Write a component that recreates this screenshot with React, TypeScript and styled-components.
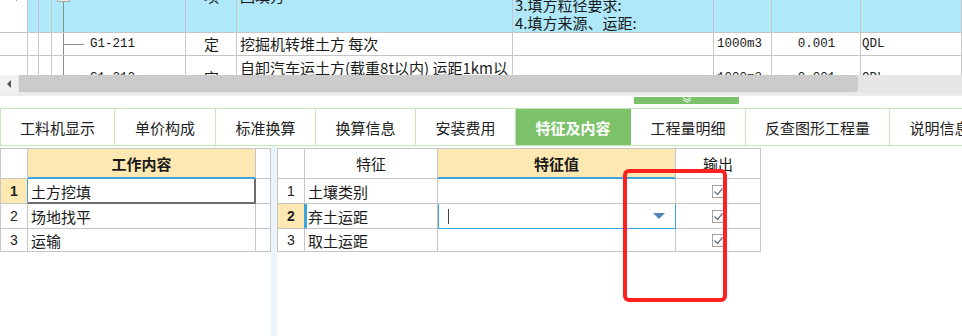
import React from "react";
import styled, { createGlobalStyle } from "styled-components";

const LINE = "#c6c6c6";
const GREEN = "#7cc26a";
const GREEN_LINE = "#c3e5b9";
const BLUE_ROW = "#aee8f9";
const HEADER_SEL = "#fde8b1";
const SEL_BLUE = "#3ea4dc";
const CJK = '"Noto Sans CJK SC", "Noto Sans", sans-serif';
const MONO = '"Liberation Mono", "DejaVu Sans Mono", monospace';

const Global = createGlobalStyle`
  html, body { margin: 0; padding: 0; background: #fff; overflow: hidden; }
  body { font-family: ${CJK}; color: #1a1a1a; }
  * { box-sizing: border-box; }
`;

const Page = styled.div`
  position: relative;
  width: 962px;
  height: 336px;
  overflow: hidden;
  background: #fff;
  display: flex;
  flex-direction: column;
`;

/* ---------- top grid ---------- */
const TopGrid = styled.div`
  height: 75px;
  overflow: hidden;
  flex: none;
`;
const TopBody = styled.div`
  margin-top: -40px;
`;
const TRow = styled.div<{ $h: number; $bg?: string }>`
  display: grid;
  grid-template-columns: 28px 11px 13px 134px 51px 276px 201px 58px 89px 101px;
  height: ${(p) => p.$h}px;
  background: ${(p) => p.$bg ?? "#fff"};
`;
const TCell = styled.div<{
  $center?: boolean;
  $mono?: boolean;
  $pl?: number;
  $white?: boolean;
  $wrap?: boolean;
}>`
  position: relative;
  display: flex;
  align-items: ${(p) => (p.$wrap ? "flex-start" : "center")};
  justify-content: ${(p) => (p.$center ? "center" : "flex-start")};
  padding: ${(p) => (p.$wrap ? "3px" : "0")} 2px 0 ${(p) => p.$pl ?? 3}px;
  border-right: 1px solid ${LINE};
  border-bottom: 1px solid ${LINE};
  overflow: hidden;
  white-space: ${(p) => (p.$wrap ? "normal" : "nowrap")};
  word-break: break-all;
  line-height: 18px;
  font-family: ${(p) => (p.$mono ? MONO : CJK)};
  font-size: ${(p) => (p.$mono ? "12.5px" : "15px")};
  background: ${(p) => (p.$white ? "#fff" : "transparent")};
`;
const Lines = styled.div`
  white-space: pre-line;
  line-height: 18px;
`;
const TreeRoot = styled.span`
  position: absolute;
  left: 5px;
  top: calc(50% - 7px);
  width: 13px;
  height: 13px;
  border: 1px solid #a9a9a9;
  background: #eaeaea;
`;
const TreeV = styled.span<{ $fromMid?: boolean }>`
  position: absolute;
  left: 11px;
  top: ${(p) => (p.$fromMid ? "calc(50% + 6px)" : "0")};
  bottom: 0;
  width: 1px;
  background: #8c8c8c;
`;
const TreeH = styled.span`
  position: absolute;
  left: 12px;
  top: 50%;
  width: 20px;
  height: 1px;
  background: #8c8c8c;
`;
const RowMark = styled.span`
  width: 0;
  height: 0;
  margin-left: 16px;
  border-top: 5px solid transparent;
  border-bottom: 5px solid transparent;
  border-left: 5px solid #333;
`;

/* ---------- scrollbar ---------- */
const ScrollBar = styled.div`
  height: 18px;
  flex: none;
  display: flex;
  background: #e6e6e6;
`;
const ScrollBtn = styled.div`
  width: 18px;
  display: flex;
  align-items: center;
  justify-content: center;
  background: #f1f1f1;
`;
const LeftArrow = styled.span`
  width: 0;
  height: 0;
  border-top: 4px solid transparent;
  border-bottom: 4px solid transparent;
  border-right: 4px solid #555;
`;
const Thumb = styled.div`
  width: 839px;
  margin: 0 0 1px 1px;
  background: #cbcbcb;
  border-radius: 0 3px 3px 0;
`;

/* ---------- splitter ---------- */
const Splitter = styled.div`
  height: 15px;
  flex: none;
  background: linear-gradient(#ececec 0 3px, #fff 3px);
  display: flex;
  align-items: flex-start;
`;
const Handle = styled.div`
  margin: 4px 0 0 634px;
  width: 105px;
  height: 7px;
  background: ${GREEN};
  display: flex;
  justify-content: center;
  align-items: flex-start;
`;

/* ---------- tabs ---------- */
const TabBar = styled.div`
  height: 38px;
  flex: none;
  display: flex;
  border-top: 1px solid ${GREEN_LINE};
  border-bottom: 1px solid ${GREEN_LINE};
  border-left: 1px solid ${GREEN_LINE};
  overflow: hidden;
`;
const Tab = styled.div<{ $w: number; $active?: boolean }>`
  flex: none;
  width: ${(p) => p.$w}px;
  display: flex;
  align-items: center;
  justify-content: center;
  white-space: nowrap;
  font-size: 15px;
  font-weight: ${(p) => (p.$active ? 700 : 400)};
  color: ${(p) => (p.$active ? "#fff" : "#222")};
  background: ${(p) => (p.$active ? GREEN : "#fff")};
  border-right: 1px solid ${(p) => (p.$active ? GREEN : GREEN_LINE)};
`;

/* ---------- lower grids ---------- */
const Lower = styled.div`
  flex: 1;
  display: flex;
  margin-top: 2px;
`;
const Grid = styled.div<{ $cols: string }>`
  display: grid;
  grid-template-columns: ${(p) => p.$cols};
  grid-template-rows: 30px 25px 25px 23px;
  align-self: flex-start;
  border-top: 1px solid ${LINE};
  border-left: 1px solid ${LINE};
`;
const VSplit = styled.div`
  width: 6px;
  margin-top: -2px;
  background: #eaf5fb;
`;
const Cell = styled.div<{ $sel?: boolean }>`
  display: flex;
  align-items: center;
  padding-left: 3px;
  border-right: 1px solid ${LINE};
  border-bottom: 1px solid ${LINE};
  font-size: 15px;
  white-space: nowrap;
  overflow: hidden;
  box-shadow: ${(p) => (p.$sel ? `inset 2px 0 0 ${SEL_BLUE}` : "none")};
`;
const HeadCell = styled.div<{ $sel?: boolean }>`
  display: flex;
  align-items: center;
  justify-content: center;
  border-right: 1px solid ${LINE};
  border-bottom: ${(p) => (p.$sel ? `2px solid ${SEL_BLUE}` : `1px solid ${LINE}`)};
  background: ${(p) => (p.$sel ? HEADER_SEL : "#fff")};
  font-size: 15px;
  font-weight: ${(p) => (p.$sel ? 700 : 400)};
`;
const NumCell = styled.div<{ $sel?: boolean }>`
  display: flex;
  align-items: center;
  justify-content: center;
  border-right: 1px solid ${(p) => (p.$sel ? SEL_BLUE : LINE)};
  border-bottom: 1px solid ${LINE};
  background: ${(p) => (p.$sel ? HEADER_SEL : "#fff")};
  font-family: "Liberation Sans", Arial, sans-serif;
  font-size: 14px;
  font-weight: ${(p) => (p.$sel ? 700 : 400)};
  color: #222;
`;
const FocusCell = styled(Cell)`
  border-right: 1px solid #6e6e6e;
  border-bottom: 1px solid #6e6e6e;
  box-shadow: inset -1px -1px 0 #6e6e6e;
`;
const EditCell = styled.div`
  display: flex;
  align-items: center;
  justify-content: space-between;
  padding: 0 10px;
  border-right: 1px solid ${SEL_BLUE};
  border-bottom: 1px solid ${SEL_BLUE};
  box-shadow: inset 1px 0 0 ${SEL_BLUE};
`;
const Caret = styled.span`
  width: 1px;
  height: 15px;
  background: #444;
`;
const DropArrow = styled.span`
  width: 0;
  height: 0;
  border-left: 6px solid transparent;
  border-right: 6px solid transparent;
  border-top: 6px solid #4f86b9;
`;
const CheckCell = styled.div`
  display: flex;
  align-items: center;
  justify-content: center;
  border-right: 1px solid ${LINE};
  border-bottom: 1px solid ${LINE};
`;
const Box = styled.span`
  width: 13px;
  height: 13px;
  border: 1px solid #a3a3a3;
  background: #fff;
  display: flex;
  align-items: center;
  justify-content: center;
`;
const RedBox = styled.div`
  position: absolute;
  left: 623px;
  top: 169px;
  width: 104px;
  height: 133px;
  border: 4px solid #ff2020;
  border-radius: 6px;
  pointer-events: none;
`;

const Check = () => (
  <Box>
    <svg width="11" height="11" viewBox="0 0 11 11">
      <polyline points="1.5,5.5 4.5,8.5 9.5,2.5" fill="none" stroke="#6c7786" strokeWidth="1.3" />
    </svg>
  </Box>
);

const tabs: { label: string; w: number; active?: boolean }[] = [
  { label: "工料机显示", w: 114 },
  { label: "单价构成", w: 101 },
  { label: "标准换算", w: 100 },
  { label: "换算信息", w: 100 },
  { label: "安装费用", w: 100 },
  { label: "特征及内容", w: 115, active: true },
  { label: "工程量明细", w: 115 },
  { label: "反查图形工程量", w: 144 },
  { label: "说明信息", w: 100 },
];

const works = ["土方挖填", "场地找平", "运输"];
const features = ["土壤类别", "弃土运距", "取土运距"];

export default function App() {
  return (
    <Page>
      <Global />
      <TopGrid>
        <TopBody>
          <TRow $h={73} $bg={BLUE_ROW}>
            <TCell $white $pl={0}>
              <RowMark />
            </TCell>
            <TCell />
            <TCell />
            <TCell $mono $pl={26}>
              <TreeRoot />
              <TreeV $fromMid />
              000000000000
            </TCell>
            <TCell $center>项</TCell>
            <TCell>回填方</TCell>
            <TCell $pl={2}>
              <Lines>{"1.土壤类别:\n2.填方材料品种:\n3.填方粒径要求:\n4.填方来源、运距:"}</Lines>
            </TCell>
            <TCell $mono>m3</TCell>
            <TCell $mono $center></TCell>
            <TCell $mono $pl={1}>1</TCell>
          </TRow>
          <TRow $h={23}>
            <TCell />
            <TCell />
            <TCell />
            <TCell $mono $pl={38}>
              <TreeV />
              <TreeH />
              G1-211
            </TCell>
            <TCell $center>定</TCell>
            <TCell>挖掘机转堆土方 每次</TCell>
            <TCell />
            <TCell $mono>1000m3</TCell>
            <TCell $mono $center>0.001</TCell>
            <TCell $mono $pl={1}>QDL</TCell>
          </TRow>
          <TRow $h={44}>
            <TCell />
            <TCell />
            <TCell />
            <TCell $mono $pl={38}>
              <TreeV />
              <TreeH />
              G1-212
            </TCell>
            <TCell $center>定</TCell>
            <TCell $wrap>自卸汽车运土方(载重8t以内) 运距1km以内</TCell>
            <TCell />
            <TCell $mono>1000m3</TCell>
            <TCell $mono $center>0.001</TCell>
            <TCell $mono $pl={1}>QDL</TCell>
          </TRow>
        </TopBody>
      </TopGrid>

      <ScrollBar>
        <ScrollBtn>
          <LeftArrow />
        </ScrollBtn>
        <Thumb />
      </ScrollBar>

      <Splitter>
        <Handle>
          <svg width="10" height="6" viewBox="0 0 10 6">
            <polyline points="1,0.5 5,3 9,0.5" fill="none" stroke="#fff" strokeWidth="1" />
            <polyline points="1,2.8 5,5.3 9,2.8" fill="none" stroke="#fff" strokeWidth="1" />
          </svg>
        </Handle>
      </Splitter>

      <TabBar>
        {tabs.map((t) => (
          <Tab key={t.label} $w={t.w} $active={t.active}>
            {t.label}
          </Tab>
        ))}
      </TabBar>

      <Lower>
        <Grid $cols="27px 228px 15px">
          <HeadCell />
          <HeadCell $sel>工作内容</HeadCell>
          <HeadCell />
          {works.map((w, i) => (
            <React.Fragment key={w}>
              <NumCell $sel={i === 0}>{i + 1}</NumCell>
              {i === 0 ? <FocusCell>{w}</FocusCell> : <Cell>{w}</Cell>}
              <Cell />
            </React.Fragment>
          ))}
        </Grid>
        <VSplit />
        <Grid $cols="27px 133px 238px 85px">
          <HeadCell />
          <HeadCell>特征</HeadCell>
          <HeadCell $sel>特征值</HeadCell>
          <HeadCell>输出</HeadCell>
          {features.map((f, i) => (
            <React.Fragment key={f}>
              <NumCell $sel={i === 1}>{i + 1}</NumCell>
              <Cell $sel={i === 1}>{f}</Cell>
              {i === 1 ? (
                <EditCell>
                  <Caret />
                  <DropArrow />
                </EditCell>
              ) : (
                <Cell />
              )}
              <CheckCell>
                <Check />
              </CheckCell>
            </React.Fragment>
          ))}
        </Grid>
      </Lower>

      <RedBox />
    </Page>
  );
}
